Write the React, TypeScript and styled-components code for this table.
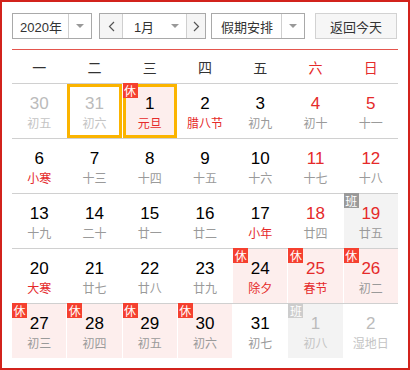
import React from 'react';
import styled, { createGlobalStyle } from 'styled-components';

const GlobalStyle = createGlobalStyle`
  html, body {
    margin: 0;
    padding: 0;
    background: #fff;
  }
  body {
    font-family: "Liberation Sans", "Noto Sans CJK SC", sans-serif;
  }
`;

const Frame = styled.div`
  width: 410px;
  height: 370px;
  box-sizing: border-box;
  border: 2px solid #d2231c;
  padding: 11px 10px 0;
`;

const Toolbar = styled.div`
  display: flex;
  height: 26px;
  color: #333;
  font-size: 13px;
`;

const Select = styled.div<{ $width: number; $gap?: number }>`
  display: flex;
  width: ${(p) => p.$width}px;
  margin-left: ${(p) => p.$gap || 0}px;
  box-sizing: border-box;
  border: 1px solid #a9a9a9;
  background: #fff;
`;

const SelectText = styled.div`
  flex: 1;
  display: flex;
  align-items: center;
  justify-content: center;
  padding-left: 1px;
`;

const Caret = styled.div<{ $divider?: boolean }>`
  width: 22px;
  display: flex;
  align-items: center;
  justify-content: center;
  border-left: ${(p) => (p.$divider ? '1px solid #cfcfcf' : 'none')};

  &::after {
    content: '';
    border-left: 4px solid transparent;
    border-right: 4px solid transparent;
    border-top: 4px solid #999;
  }
`;

const StepButton = styled.div<{ $side: 'left' | 'right' }>`
  width: ${(p) => (p.$side === 'left' ? 22 : 18)}px;
  display: flex;
  align-items: center;
  justify-content: center;
  background: #f5f5f5;
  ${(p) => (p.$side === 'left' ? 'border-right' : 'border-left')}: 1px solid #cfcfcf;
`;

const TodayButton = styled.div`
  width: 82px;
  margin-left: 10px;
  box-sizing: border-box;
  border: 1px solid #d2d2d2;
  background: #f6f6f6;
  display: flex;
  align-items: center;
  justify-content: center;
`;

const Weekdays = styled.div`
  margin-top: 10px;
  border-top: 1px solid #e4554d;
  height: 33px;
  display: grid;
  grid-template-columns: repeat(7, 1fr);
  column-gap: 1px;
`;

const Weekday = styled.div<{ $weekend?: boolean }>`
  display: flex;
  align-items: center;
  justify-content: center;
  font-size: 14px;
  color: ${(p) => (p.$weekend ? '#e52a2a' : '#333')};
`;

const WeekRow = styled.div`
  border-top: 1px solid #d0d0d0;
  display: grid;
  grid-template-columns: repeat(7, 1fr);
  column-gap: 1px;
`;

type Tone = 'holiday' | 'work' | 'plain';

const Cell = styled.div<{ $tone: Tone; $selected?: boolean }>`
  position: relative;
  height: 54px;
  display: flex;
  flex-direction: column;
  align-items: center;
  padding-top: 10px;
  box-sizing: border-box;
  background: ${(p) => (p.$tone === 'holiday' ? '#fdeeed' : p.$tone === 'work' ? '#f3f3f3' : '#fff')};
  box-shadow: ${(p) => (p.$selected ? 'inset 0 0 0 3px #fbb400' : 'none')};
`;

const DayNum = styled.div<{ $color: string }>`
  font-size: 17px;
  line-height: 20px;
  color: ${(p) => p.$color};
`;

const Lunar = styled.div<{ $color: string }>`
  margin-top: 1px;
  font-size: 12px;
  line-height: 16px;
  color: ${(p) => p.$color};
  font-family: "Noto Sans CJK SC", sans-serif;
`;

const Badge = styled.div<{ $kind: 'rest' | 'work'; $faded?: boolean }>`
  position: absolute;
  top: -1px;
  left: 0;
  width: 15px;
  height: 15px;
  font-size: 12px;
  line-height: 15px;
  text-align: center;
  color: #fff;
  font-family: "Noto Sans CJK SC", sans-serif;
  background: ${(p) => (p.$kind === 'rest' ? '#f5402f' : p.$faded ? '#cdcdcd' : '#9a9a9a')};
`;

interface Day {
  n: number;
  lunar: string;
  other?: boolean;
  weekend?: boolean;
  fest?: boolean;
  rest?: boolean;
  work?: boolean;
  selected?: boolean;
}

const weeks: Day[][] = [
  [
    { n: 30, lunar: '初五', other: true },
    { n: 31, lunar: '初六', other: true, selected: true },
    { n: 1, lunar: '元旦', fest: true, rest: true, selected: true },
    { n: 2, lunar: '腊八节', fest: true },
    { n: 3, lunar: '初九' },
    { n: 4, lunar: '初十', weekend: true },
    { n: 5, lunar: '十一', weekend: true },
  ],
  [
    { n: 6, lunar: '小寒', fest: true },
    { n: 7, lunar: '十三' },
    { n: 8, lunar: '十四' },
    { n: 9, lunar: '十五' },
    { n: 10, lunar: '十六' },
    { n: 11, lunar: '十七', weekend: true },
    { n: 12, lunar: '十八', weekend: true },
  ],
  [
    { n: 13, lunar: '十九' },
    { n: 14, lunar: '二十' },
    { n: 15, lunar: '廿一' },
    { n: 16, lunar: '廿二' },
    { n: 17, lunar: '小年', fest: true },
    { n: 18, lunar: '廿四', weekend: true },
    { n: 19, lunar: '廿五', weekend: true, work: true },
  ],
  [
    { n: 20, lunar: '大寒', fest: true },
    { n: 21, lunar: '廿七' },
    { n: 22, lunar: '廿八' },
    { n: 23, lunar: '廿九' },
    { n: 24, lunar: '除夕', fest: true, rest: true },
    { n: 25, lunar: '春节', fest: true, rest: true, weekend: true },
    { n: 26, lunar: '初二', rest: true, weekend: true },
  ],
  [
    { n: 27, lunar: '初三', rest: true },
    { n: 28, lunar: '初四', rest: true },
    { n: 29, lunar: '初五', rest: true },
    { n: 30, lunar: '初六', rest: true },
    { n: 31, lunar: '初七' },
    { n: 1, lunar: '初八', other: true, work: true },
    { n: 2, lunar: '湿地日', other: true },
  ],
];

const weekdayNames = ['一', '二', '三', '四', '五', '六', '日'];

function Chevron({ dir }: { dir: 'left' | 'right' }) {
  return (
    <svg width="7" height="11" viewBox="0 0 7 11">
      <polyline
        points={dir === 'left' ? '6,1 1.5,5.5 6,10' : '1,1 5.5,5.5 1,10'}
        fill="none"
        stroke="#555"
        strokeWidth="1.2"
      />
    </svg>
  );
}

function DayCell({ day }: { day: Day }) {
  const tone: Tone = day.rest ? 'holiday' : day.work ? 'work' : 'plain';
  const numColor = day.other ? '#bbb' : day.weekend ? '#e52a2a' : '#000';
  const lunarColor = day.other ? '#c4c4c4' : day.fest ? '#e52a2a' : '#9a9a9a';
  return (
    <Cell $tone={tone} $selected={day.selected}>
      {day.rest && <Badge $kind="rest">休</Badge>}
      {day.work && <Badge $kind="work" $faded={day.other}>班</Badge>}
      <DayNum $color={numColor}>{day.n}</DayNum>
      <Lunar $color={lunarColor}>{day.lunar}</Lunar>
    </Cell>
  );
}

export default function App() {
  return (
    <>
      <GlobalStyle />
      <Frame>
        <Toolbar>
          <Select $width={80}>
            <SelectText>2020年</SelectText>
            <Caret $divider />
          </Select>
          <Select $width={107} $gap={7}>
            <StepButton $side="left">
              <Chevron dir="left" />
            </StepButton>
            <SelectText>1月</SelectText>
            <Caret />
            <StepButton $side="right">
              <Chevron dir="right" />
            </StepButton>
          </Select>
          <Select $width={94} $gap={5}>
            <SelectText>假期安排</SelectText>
            <Caret $divider />
          </Select>
          <TodayButton>返回今天</TodayButton>
        </Toolbar>

        <Weekdays>
          {weekdayNames.map((w, i) => (
            <Weekday key={w} $weekend={i >= 5}>{w}</Weekday>
          ))}
        </Weekdays>

        {weeks.map((week, wi) => (
          <WeekRow key={wi}>
            {week.map((day, di) => (
              <DayCell key={di} day={day} />
            ))}
          </WeekRow>
        ))}
      </Frame>
    </>
  );
}
